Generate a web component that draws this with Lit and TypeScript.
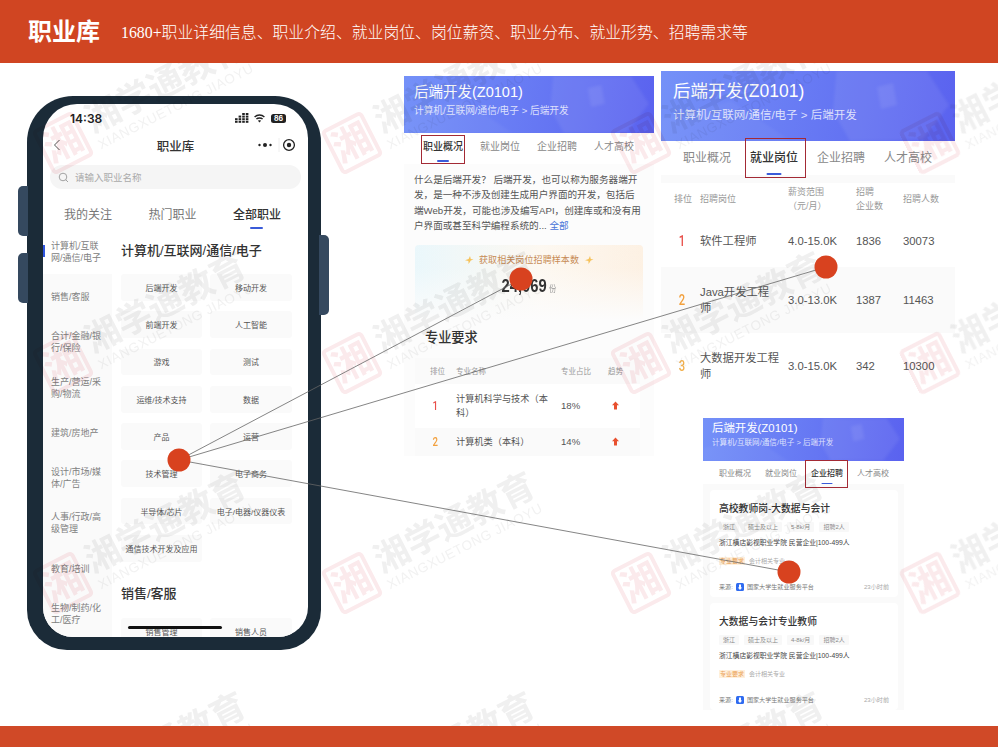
import { LitElement, css, html, svg } from 'lit';
import { customElement } from 'lit/decorators.js';

const SIDE_ITEMS = [
  ['计算机/互联', '网/通信/电子'],
  ['销售/客服'],
  ['合计/金融/银', '行/保险'],
  ['生产/营运/采', '购/物流'],
  ['建筑/房地产'],
  ['设计/市场/媒', '体/广告'],
  ['人事/行政/高', '级管理'],
  ['教育/培训'],
  ['生物/制药/化', '工/医疗'],
];

const TILES = [
  '后端开发', '移动开发', '前端开发', '人工智能', '游戏', '测试',
  '运维/技术支持', '数据', '产品', '运营', '技术管理', '电子商务',
  '半导体/芯片', '电子/电器/仪器仪表', '通信技术开发及应用',
];

const TABS = ['职业概况', '就业岗位', '企业招聘', '人才高校'];

const JOBS = [
  { rank: '1', name: ['软件工程师'], pay: '4.0-15.0K', firms: '1836', people: '30073', cls: 'r1' },
  { rank: '2', name: ['Java开发工程', '师'], pay: '3.0-13.0K', firms: '1387', people: '11463', cls: 'r2' },
  { rank: '3', name: ['大数据开发工程', '师'], pay: '3.0-15.0K', firms: '342', people: '10300', cls: 'r3' },
];

const POSTS = [
  { title: '高校教师岗-大数据与会计', pay: '5-8k/月' },
  { title: '大数据与会计专业教师', pay: '4-8k/月' },
];

const LINK_FROM = { x: 179, y: 460 };
const LINK_TO = [
  { x: 521, y: 279 },
  { x: 826, y: 267 },
  { x: 789, y: 572 },
];

@customElement('app-root')
export class AppRoot extends LitElement {
  static styles = css`
    :host {
      display: block;
      width: 998px;
      height: 747px;
      font-family: 'Liberation Sans', 'Noto Sans CJK SC', sans-serif;
      color: #333;
    }

    .page {
      position: relative;
      width: 998px;
      height: 747px;
      overflow: hidden;
      background: #fff;
      display: flex;
      flex-direction: column;
    }

    .top {
      position: relative;
      z-index: 3;
      height: 63px;
      flex: none;
      background: #d04522;
      color: #fff;
      display: flex;
      align-items: center;
      padding-left: 28px;
    }
    .top h1 {
      margin: 0;
      width: 93px;
      font-size: 24px;
      line-height: 30px;
      font-weight: 700;
    }
    .top p {
      margin: 0;
      font-family: 'Liberation Serif', 'Noto Sans CJK SC', serif;
      font-size: 15.85px;
      font-weight: 300;
      white-space: nowrap;
    }

    .main {
      flex: 1;
      display: flex;
      align-items: flex-start;
      min-height: 0;
    }
    .bottom {
      position: relative;
      z-index: 2;
      height: 21px;
      flex: none;
      background: #ce4320;
      opacity: 0.97;
    }

    /* phone */
    .phone {
      position: relative;
      box-sizing: border-box;
      flex: none;
      width: 294px;
      height: 554px;
      margin: 33px 0 0 27px;
      padding: 8px 13px 13px 16px;
      background: #1b2b38;
      border-radius: 46px 46px 40px 40px;
    }
    .btn {
      position: absolute;
      width: 10px;
      background: #35495f;
    }
    .btn.l1 { left: -9px; top: 90px; height: 50px; border-radius: 5px 0 0 5px; }
    .btn.l2 { left: -9px; top: 157px; height: 50px; border-radius: 5px 0 0 5px; }
    .btn.r { right: -8px; top: 139px; height: 80px; border-radius: 0 5px 5px 0; }
    .screen {
      position: relative;
      height: 100%;
      background: #fff;
      border-radius: 34px 34px 30px 30px;
      overflow: hidden;
      display: flex;
      flex-direction: column;
    }
    .status {
      height: 28px;
      flex: none;
      display: flex;
      align-items: center;
      padding: 0 22px 0 27px;
      font-family: 'Inter', sans-serif;
      font-size: 12px;
      font-weight: 600;
      color: #222;
    }
    .status .time { flex: 1; }
    .status svg { display: block; }
    .status .wifi { margin: 0 6px 0 5px; }
    .batt {
      width: 15px;
      height: 9px;
      border-radius: 2.5px;
      background: #222;
      color: #fff;
      font-size: 7px;
      line-height: 9px;
      font-weight: 700;
      text-align: center;
    }
    .nav {
      position: relative;
      height: 26px;
      flex: none;
      display: flex;
      align-items: center;
      justify-content: center;
      font-size: 12.5px;
      font-weight: 500;
      color: #333;
    }
    .nav .back { position: absolute; left: 10px; top: 7px; }
    .nav .more { position: absolute; right: 12px; top: 6px; }
    .search {
      flex: none;
      height: 24px;
      margin: 7px 7px 0;
      border-radius: 12px;
      background: #f5f5f5;
      display: flex;
      align-items: center;
      gap: 6px;
      padding-left: 8px;
      font-size: 9.5px;
      color: #aaa;
    }
    .ptabs {
      flex: none;
      height: 26px;
      margin-top: 14px;
      padding-left: 21px;
      display: flex;
      gap: 36.5px;
      font-size: 12px;
      line-height: 24px;
      color: #777;
    }
    .ptabs span { position: relative; width: 48px; white-space: nowrap; }
    .ptabs .on { color: #333; font-weight: 500; }
    .ptabs .on::after {
      content: '';
      position: absolute;
      left: 17px;
      bottom: 0;
      width: 13px;
      height: 2px;
      border-radius: 1px;
      background: #3a5bd9;
    }
    .pbody {
      flex: 1;
      min-height: 0;
      display: flex;
    }
    .side {
      flex: none;
      width: 69px;
      background: #fafafa;
    }
    .side div {
      position: relative;
      box-sizing: border-box;
      height: 45.3px;
      padding-left: 8px;
      display: flex;
      flex-direction: column;
      justify-content: center;
      font-size: 9px;
      line-height: 12px;
      color: #808080;
      white-space: nowrap;
    }
    .side .on { background: #fff; }
    .side .on::before {
      content: '';
      position: absolute;
      left: 0;
      top: 16px;
      width: 2px;
      height: 12px;
      background: #2f55e0;
    }
    .content {
      flex: 1;
      padding: 13px 16px 0 9px;
      overflow: hidden;
    }
    .content h3 {
      margin: 0;
      font-size: 13px;
      line-height: 18px;
      font-weight: 500;
      color: #333;
      white-space: nowrap;
    }
    .tiles {
      display: grid;
      grid-template-columns: 81px 82px;
      grid-auto-rows: 26.7px;
      gap: 10.6px 8px;
      margin: 14px 0 23px;
    }
    .tiles.next { margin: 15px 0 0; }
    .tiles span {
      background: #fafafa;
      border-radius: 3px;
      display: flex;
      align-items: center;
      justify-content: center;
      font-size: 8px;
      color: #555;
      white-space: nowrap;
    }
    .home {
      position: absolute;
      left: 85px;
      top: 522px;
      width: 94px;
      height: 3px;
      border-radius: 2px;
      background: #111;
    }

    /* detail panels */
    .panel {
      flex: none;
      background: #fff;
    }
    .p1 {
      width: 250px;
      height: 380px;
      margin: 13px 0 0 83px;
      background: #fcfcfc;
    }
    .right {
      flex: none;
      display: flex;
      flex-direction: column;
      margin: 8px 0 0 7px;
    }
    .p2 { width: 294px; height: 328px; }
    .p3 {
      width: 201px;
      height: 292px;
      margin: 19px 0 0 42px;
    }
    .head {
      position: relative;
      overflow: hidden;
      background: linear-gradient(100deg, #7491f8, #5a62ef);
      color: #fff;
      white-space: nowrap;
    }
    .head svg {
      position: absolute;
      inset: 0;
      width: 100%;
      height: 100%;
      filter: blur(1.5px);
    }
    .head b, .head i {
      position: relative;
      display: block;
      font-style: normal;
      font-weight: 400;
    }
    .head i { color: rgba(255, 255, 255, 0.78); }
    .p1 .head { height: 57px; padding-left: 10px; }
    .p1 .head b { font-size: 14.5px; line-height: 20px; padding-top: 6px; }
    .p1 .head i { font-size: 9.7px; line-height: 12px; margin-top: 3px; }
    .p2 .head { height: 70px; padding-left: 12px; }
    .p2 .head b { font-size: 17.5px; line-height: 24px; padding-top: 8px; }
    .p2 .head i { font-size: 11.5px; line-height: 14px; margin-top: 5px; }
    .p3 .head { height: 43px; padding-left: 9px; }
    .p3 .head b { font-size: 11.4px; line-height: 14px; padding-top: 3px; }
    .p3 .head i { font-size: 7.6px; line-height: 10px; margin-top: 3px; }

    .tabs {
      display: flex;
      background: #fff;
      color: #888;
      white-space: nowrap;
    }
    .tabs span { position: relative; text-align: center; }
    .tabs .on { color: #333; font-weight: 500; }
    .tabs .on::before {
      content: '';
      position: absolute;
      left: 50%;
      border-radius: 1px;
      background: #3a5bd9;
      transform: translateX(-50%);
    }
    .tabs .on::after {
      content: '';
      position: absolute;
      border: 1px solid #a32a35;
    }
    .p1 .tabs { height: 31px; padding-left: 19px; gap: 17px; font-size: 10px; line-height: 28px; }
    .p1 .tabs span { width: 40px; }
    .p1 .tabs .on::before { bottom: 2px; width: 12px; height: 2px; }
    .p1 .tabs .on::after { left: -2px; right: -2px; top: 2px; bottom: 0; }
    .p2 .tabs { height: 34px; padding-left: 22px; gap: 19px; font-size: 12px; line-height: 34px; }
    .p2 .tabs span { width: 48px; }
    .p2 .tabs .on::before { bottom: 0; width: 15px; height: 2px; }
    .p2 .tabs .on::after { left: -5px; right: -8px; top: -3px; bottom: -3px; }
    .p3 .tabs { height: 23px; padding-left: 16px; gap: 14px; font-size: 8px; line-height: 25px; }
    .p3 .tabs span { width: 32px; }
    .p3 .tabs .on::before { bottom: 0; width: 11px; height: 1.5px; }
    .p3 .tabs .on::after { left: -6px; right: -5px; top: -1px; bottom: -4px; }

    .intro {
      margin: 0;
      padding: 8px 0 0 10px;
      font-size: 9.6px;
      line-height: 15.4px;
      color: #555;
      white-space: nowrap;
    }
    .intro a { color: #4a74d8; }
    .stat {
      box-sizing: border-box;
      height: 75px;
      margin: 11px 11px 0;
      padding-top: 8px;
      border-radius: 4px;
      background:
        linear-gradient(to bottom, rgba(252, 252, 252, 0.2) 30%, #fcfcfc),
        linear-gradient(90deg, #e6f6fb, #fdf7ee 55%, #fdeedd);
      text-align: center;
    }
    .stat .label {
      display: flex;
      align-items: center;
      justify-content: center;
      gap: 5px;
      font-size: 9px;
      line-height: 14px;
      letter-spacing: 0.1px;
      color: #c78b55;
    }
    .stat .num {
      margin-top: 8px;
      font-size: 18px;
      line-height: 22px;
      font-weight: 700;
      color: #333;
      transform: scaleX(0.82);
    }
    .stat .num small {
      font-size: 9px;
      font-weight: 400;
      color: #999;
      margin-left: 3px;
    }
    .p1 h4 {
      margin: 9px 0 0 21px;
      font-size: 13.2px;
      line-height: 18px;
      font-weight: 500;
      color: #333;
    }
    .major {
      margin: 11px 14px 0 11px;
      font-size: 9.2px;
      color: #555;
    }
    .major > div {
      display: grid;
      grid-template-columns: 41px 105px 47px 1fr;
      align-items: center;
    }
    .major .hd {
      height: 26px;
      font-size: 7.5px;
      color: #999;
      background: #fafafa;
    }
    .major .hd span:first-child { padding-left: 15px; white-space: nowrap; }
    .major .row { background: #fff; }
    .major .row.a { height: 44px; }
    .major .row.b { height: 28px; background: #fafafa; }
    .major .rk { padding-left: 22px; }
    .major .name { line-height: 14px; white-space: nowrap; }
    .major .pct { font-size: 9.6px; }
    .major .arr { padding-left: 4px; display: flex; }
    .r1 { color: #e8504a; }
    .r2 { color: #f2a03d; }
    .r3 { color: #f2b04d; }
    .rk {
      font-family: 'Roboto', sans-serif;
      font-size: 12px;
      font-weight: 500;
      transform: scaleX(0.8);
      transform-origin: left center;
    }

    .band { height: 8px; background: #fafafa; }
    .jobs > div {
      display: grid;
      grid-template-columns: 26px 88px 68px 47px 1fr;
      align-items: center;
      padding-left: 13px;
      font-size: 11.3px;
      color: #555;
    }
    .jobs .hd {
      height: 32px;
      font-size: 9px;
      line-height: 14px;
      color: #999;
    }
    .jobs .pay { display: inline-block; width: 36px; text-align: center; white-space: nowrap; }
    .jobs .name { line-height: 16.5px; white-space: nowrap; color: #555; }
    .jobs .rk { padding-left: 6px; font-size: 14px; }
    .jobs .job:nth-child(2) { height: 52px; }
    .jobs .job:nth-child(3) { height: 66px; background: #fafafa; }
    .jobs .job:nth-child(4) { height: 66px; }

    .posts {
      height: 226px;
      box-sizing: border-box;
      padding: 6px 6px 0 7px;
      background: #fafafa;
      display: flex;
      flex-direction: column;
      gap: 6px;
    }
    .post {
      box-sizing: border-box;
      height: 107px;
      padding: 12px 9px 0;
      background: #fff;
      border-radius: 4px;
      white-space: nowrap;
    }
    .post h5 {
      margin: 0;
      font-size: 9.8px;
      line-height: 14px;
      font-weight: 500;
      color: #333;
    }
    .post .tags {
      display: flex;
      gap: 5px;
      margin-top: 6px;
      font-size: 6px;
      line-height: 10px;
      color: #888;
    }
    .post .tags span { padding: 0 4px; background: #f8f8f8; border-radius: 1px; }
    .post .co { margin-top: 6px; font-size: 6.8px; line-height: 10px; color: #444; }
    .post .req {
      display: flex;
      align-items: center;
      gap: 4px;
      margin-top: 9px;
      font-size: 6px;
      line-height: 8px;
      color: #aaa;
    }
    .post .req em {
      font-style: normal;
      padding: 0 1px;
      background: #fff0dc;
      color: #eba35a;
    }
    .post .src {
      display: flex;
      align-items: center;
      margin-top: 17px;
      font-size: 6.1px;
      line-height: 10px;
      color: #777;
    }
    .post .src svg { margin: 0 3px 0 3px; }
    .post .src .ago { margin-left: auto; color: #aaa; }

    /* slide overlays */
    .marks {
      position: absolute;
      inset: 0;
      z-index: 1;
      padding: 118px 0 0 40px;
      display: grid;
      grid-template-columns: repeat(4, 289px);
      grid-auto-rows: 220px;
      pointer-events: none;
      mix-blend-mode: multiply;
      filter: blur(0.7px);
    }
    .mark {
      display: flex;
      align-items: center;
      gap: 8px;
      width: 260px;
      height: 50px;
      transform: rotate(-27deg);
      transform-origin: 23px 25px;
      white-space: nowrap;
    }
    .stamp {
      flex: none;
      box-sizing: border-box;
      width: 46px;
      height: 50px;
      display: flex;
      align-items: center;
      justify-content: center;
      border: 4px solid #fbeaec;
      border-radius: 5px;
      font-size: 38px;
      line-height: 1;
      font-weight: 700;
      color: #fbeaec;
      overflow: hidden;
    }
    .mark-text b {
      display: block;
      font-size: 35px;
      line-height: 38px;
      font-weight: 700;
      color: #f0f0f0;
    }
    .mark-text i {
      display: block;
      font-style: normal;
      font-size: 13.5px;
      line-height: 14px;
      letter-spacing: 0.6px;
      color: #f2f2f2;
    }
    .links {
      position: absolute;
      inset: 0;
      z-index: 2;
      pointer-events: none;
    }
  `;

  private renderPanelHead() {
    return html`<div class="head">
      <svg viewBox="0 0 294 70" preserveAspectRatio="xMaxYMid slice">
        <path d="M176 -6 L262 -6 L288 34 L262 68 L190 72 L172 40 Z" fill="#fff" opacity="0.07"/>
        <path d="M216 16 L232 12 L236 34 L220 38 Z" fill="#fff" opacity="0.08"/>
        <path d="M0 48 L70 30 L130 70 L0 70 Z" fill="#fff" opacity="0.04"/>
      </svg>
      <b>后端开发(Z0101)</b>
      <i>计算机/互联网/通信/电子 > 后端开发</i>
    </div>`;
  }

  private renderTabs(active: number) {
    return html`<div class="tabs">
      ${TABS.map((t, i) => html`<span class=${i === active ? 'on' : ''}>${t}</span>`)}
    </div>`;
  }

  private renderPhone() {
    return html`<div class="phone">
      <div class="btn l1"></div>
      <div class="btn l2"></div>
      <div class="btn r"></div>
      <div class="screen">
        <div class="status">
          <span class="time">14:38</span>
          <svg width="14" height="10" viewBox="0 0 14 10" fill="#222">
            ${[0, 1, 2, 3].map((c) =>
              [0, 1, 2, 3]
                .filter((r) => r >= 2 - c || (c === 3 && r === 0))
                .map((r) => svg`<rect x=${c * 3.6} y=${r * 2.6} width="2.6" height="2"/>`))}
          </svg>
          <svg class="wifi" width="11" height="9" viewBox="0 0 11 9" fill="none" stroke="#222" stroke-width="1.4">
            <path d="M0.6 3 C3.4 0.4 7.6 0.4 10.4 3"/>
            <path d="M2.4 5 C4 3.6 7 3.6 8.6 5"/>
            <path d="M5.5 8.6 L4 6.8 C4.8 6.2 6.2 6.2 7 6.8 Z" fill="#222" stroke="none"/>
          </svg>
          <span class="batt">86</span>
        </div>
        <div class="nav">
          <svg class="back" width="8" height="12" viewBox="0 0 8 12" fill="none" stroke="#555" stroke-width="1">
            <path d="M6.5 1 L1.5 6 L6.5 11"/>
          </svg>
          职业库
          <svg class="more" width="38" height="14" viewBox="0 0 38 14">
            <circle cx="1.5" cy="7" r="1.2" fill="#222"/>
            <circle cx="7" cy="7" r="2" fill="#222"/>
            <circle cx="12.5" cy="7" r="1.2" fill="#222"/>
            <line x1="21" y1="0" x2="21" y2="14" stroke="#eee"/>
            <circle cx="31" cy="7" r="5.4" fill="none" stroke="#222" stroke-width="1.3"/>
            <circle cx="31" cy="7" r="2.2" fill="#222"/>
          </svg>
        </div>
        <div class="search">
          <svg width="11" height="11" viewBox="0 0 11 11" fill="none" stroke="#999" stroke-width="0.9">
            <circle cx="5" cy="5" r="3.8"/>
            <path d="M7.8 7.8 L10 10"/>
          </svg>
          请输入职业名称
        </div>
        <div class="ptabs">
          <span>我的关注</span><span>热门职业</span><span class="on">全部职业</span>
        </div>
        <div class="pbody">
          <div class="side">
            ${SIDE_ITEMS.map(
              (lines, i) => html`<div class=${i === 0 ? 'on' : ''}>
                ${lines.map((l) => html`<span>${l}</span>`)}
              </div>`
            )}
          </div>
          <div class="content">
            <h3>计算机/互联网/通信/电子</h3>
            <div class="tiles">${TILES.map((t) => html`<span>${t}</span>`)}</div>
            <h3>销售/客服</h3>
            <div class="tiles next"><span>销售管理</span><span>销售人员</span></div>
          </div>
        </div>
        <div class="home"></div>
      </div>
    </div>`;
  }

  private renderSpark() {
    return html`<svg width="10" height="10" viewBox="0 0 10 10">
      <path d="M6 1 L6.8 4 L9.5 4.6 L6.8 5.6 L4.6 9 L4.4 6 L1 5.2 L4.6 4 Z" fill="#f6c35c"/>
    </svg>`;
  }

  private renderArrow() {
    return html`<svg width="7" height="9" viewBox="0 0 7 9">
      <path d="M3.5 0.5 L7 4.2 L5 4.2 L5 8.5 L2 8.5 L2 4.2 L0 4.2 Z" fill="#e8502f"/>
    </svg>`;
  }

  private renderOverview() {
    return html`<section class="panel p1">
      ${this.renderPanelHead()} ${this.renderTabs(0)}
      <p class="intro">
        什么是后端开发？ 后端开发，也可以称为服务器端开<br />
        发，是一种不涉及创建生成用户界面的开发，包括后<br />
        端Web开发，可能也涉及编写API，创建库或和没有用<br />
        户界面或甚至科学编程系统的... <a>全部</a>
      </p>
      <div class="stat">
        <div class="label">${this.renderSpark()}获取相关岗位招聘样本数${this.renderSpark()}</div>
        <div class="num">24,069<small>份</small></div>
      </div>
      <h4>专业要求</h4>
      <div class="major">
        <div class="hd"><span>排位</span><span>专业名称</span><span>专业占比</span><span>趋势</span></div>
        <div class="row a">
          <span class="rk r1">1</span>
          <span class="name">计算机科学与技术（本<br />科）</span>
          <span class="pct">18%</span><span class="arr">${this.renderArrow()}</span>
        </div>
        <div class="row b">
          <span class="rk r2">2</span>
          <span class="name">计算机类（本科）</span>
          <span class="pct">14%</span><span class="arr">${this.renderArrow()}</span>
        </div>
      </div>
    </section>`;
  }

  private renderJobs() {
    return html`<section class="panel p2">
      ${this.renderPanelHead()} ${this.renderTabs(1)}
      <div class="band"></div>
      <div class="jobs">
        <div class="hd">
          <span>排位</span><span>招聘岗位</span>
          <span><span class="pay">薪资范围<br />（元/月）</span></span>
          <span>招聘<br />企业数</span><span>招聘人数</span>
        </div>
        ${JOBS.map(
          (j) => html`<div class="job">
            <span class="rk ${j.cls}">${j.rank}</span>
            <span class="name">${j.name.map((n) => html`${n}<br />`)}</span>
            <span>${j.pay}</span><span>${j.firms}</span><span>${j.people}</span>
          </div>`
        )}
      </div>
    </section>`;
  }

  private renderPosts() {
    return html`<section class="panel p3">
      ${this.renderPanelHead()} ${this.renderTabs(2)}
      <div class="posts">
        ${POSTS.map(
          (p) => html`<div class="post">
            <h5>${p.title}</h5>
            <div class="tags">
              <span>浙江</span><span>硕士及以上</span><span>${p.pay}</span><span>招聘2人</span>
            </div>
            <div class="co">浙江横店影视职业学院 民营企业|100-499人</div>
            <div class="req"><em>专业要求</em>会计相关专业</div>
            <div class="src">
              来源:
              <svg width="8" height="8" viewBox="0 0 8 8">
                <rect width="8" height="8" rx="1.5" fill="#2f6bf0"/>
                <path d="M3 1.5 H5 V4.5 H6.2 L4 7 L1.8 4.5 H3 Z" fill="#fff"/>
              </svg>
              国家大学生就业服务平台
              <span class="ago">23小时前</span>
            </div>
          </div>`
        )}
      </div>
    </section>`;
  }

  render() {
    const marks = Array.from({ length: 16 });
    return html`<div class="page">
      <header class="top">
        <h1>职业库</h1>
        <p>1680+职业详细信息、职业介绍、就业岗位、岗位薪资、职业分布、就业形势、招聘需求等</p>
      </header>
      <div class="main">
        ${this.renderPhone()} ${this.renderOverview()}
        <div class="right">${this.renderJobs()} ${this.renderPosts()}</div>
      </div>
      <footer class="bottom"></footer>
      <div class="marks">
        ${marks.map(
          () => html`<div class="mark">
            <div class="stamp">湘</div>
            <div class="mark-text"><b>湘学通教育</b><i>XIANGXUETONG JIAOYU</i></div>
          </div>`
        )}
      </div>
      <svg class="links" width="998" height="747" viewBox="0 0 998 747">
        ${LINK_TO.map(
          (p) => svg`<line x1=${LINK_FROM.x} y1=${LINK_FROM.y} x2=${p.x} y2=${p.y} stroke="#666" stroke-width="0.8"/>`
        )}
        ${[LINK_FROM, ...LINK_TO].map((p) => svg`<circle cx=${p.x} cy=${p.y} r="11.5" fill="#d8421f"/>`)}
      </svg>
    </div>`;
  }
}
